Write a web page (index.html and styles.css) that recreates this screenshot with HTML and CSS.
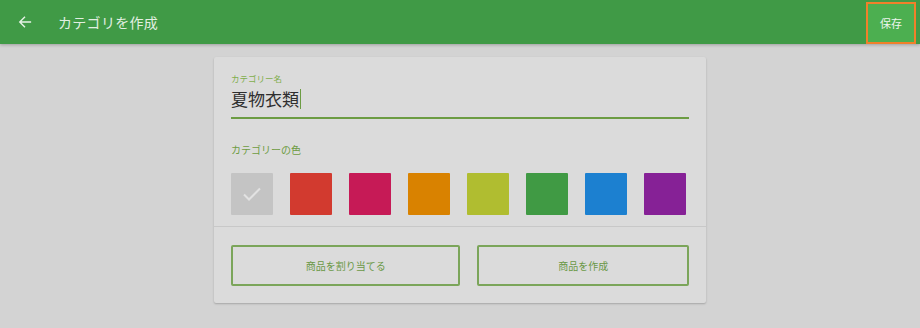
FILE: index.html
```html
<!DOCTYPE html>
<html lang="ja">
<head>
<meta charset="utf-8">
<link rel="stylesheet" href="styles.css">
</head>
<body>
<header class="appbar">
  <div class="back">
    <svg width="14" height="14" viewBox="0 0 16 16"><path d="M15 8H2.5M8 2L2 8l6 6" fill="none" stroke="#e6f2e6" stroke-width="1.6"/></svg>
  </div>
  <div class="title">カテゴリを作成</div>
  <div class="save">保存</div>
</header>
<main class="main">
  <section class="card">
    <div class="top">
      <div class="field">
        <div class="field-label">カテゴリー名</div>
        <div class="field-input">夏物衣類<span class="caret"></span></div>
      </div>
      <div class="color-label">カテゴリーの色</div>
      <div class="swatches">
        <div class="swatch sw-grey"><svg width="20" height="16" viewBox="0 0 20 16"><path d="M2 8.5l5 5L18 2.5" fill="none" stroke="#e2e2e2" stroke-width="2"/></svg></div>
        <div class="swatch sw-red"></div>
        <div class="swatch sw-pink"></div>
        <div class="swatch sw-orange"></div>
        <div class="swatch sw-lime"></div>
        <div class="swatch sw-green"></div>
        <div class="swatch sw-blue"></div>
        <div class="swatch sw-purple"></div>
      </div>
    </div>
    <div class="actions">
      <div class="btn btn-wide">商品を割り当てる</div>
      <div class="btn">商品を作成</div>
    </div>
  </section>
</main>
</body>
</html>
```

FILE: styles.css
```css
* { box-sizing: border-box; }
html, body { margin: 0; padding: 0; }
body {
  width: 920px;
  height: 328px;
  overflow: hidden;
  background: #d3d3d3;
  font-family: "Noto Sans CJK JP", "Noto Sans", sans-serif;
}
.appbar {
  height: 44px;
  background: #409a46;
  display: flex;
  align-items: center;
  box-shadow: 0 1px 3px rgba(0,0,0,0.25);
  position: relative;
}
.back {
  width: 58px;
  padding-left: 18px;
  display: flex;
  align-items: center;
}
.title {
  flex: 1;
  color: #e2efe2;
  font-size: 14px;
  letter-spacing: 0.3px;
}
.save {
  margin: 1px 4px 0 0;
  width: 50px;
  height: 42px;
  background: #4caf50;
  border: 2px solid #f0802a;
  color: #eef6ee;
  font-size: 11px;
  display: flex;
  align-items: center;
  justify-content: center;
}
.main {
  display: flex;
  justify-content: center;
  padding-top: 13px;
}
.card {
  width: 492px;
  background: #dbdbdb;
  border-radius: 2px;
  box-shadow: 0 1px 2px rgba(0,0,0,0.22);
}
.top {
  padding: 15px 17px 11px 17px;
  border-bottom: 1px solid #c8c8c8;
}
.field {
  border-bottom: 2px solid #6c9c43;
  padding-bottom: 3px;
}
.field-label {
  color: #7fae4c;
  font-size: 8.5px;
  line-height: 12px;
}
.field-input {
  color: #2e2e2e;
  font-size: 17px;
  line-height: 30px;
  display: flex;
  align-items: center;
}
.caret {
  display: inline-block;
  width: 1px;
  height: 20px;
  background: #6c9c43;
  margin-left: 1px;
}
.color-label {
  margin-top: 24px;
  color: #6e9c42;
  font-size: 10px;
  line-height: 14px;
}
.swatches {
  margin-top: 16px;
  display: flex;
  gap: 17px;
}
.swatch {
  width: 42px;
  height: 42px;
  border-radius: 1px;
  display: flex;
  align-items: center;
  justify-content: center;
}
.sw-grey { background: #c4c4c4; }
.sw-red { background: #d23a2f; }
.sw-pink { background: #c61a56; }
.sw-orange { background: #d98200; }
.sw-lime { background: #b0bd30; }
.sw-green { background: #409a44; }
.sw-blue { background: #1c80d0; }
.sw-purple { background: #862196; }
.actions {
  display: flex;
  gap: 17px;
  padding: 18px 17px 17px 17px;
}
.btn {
  flex: 211;
  height: 41px;
  border: 2px solid #7ba55a;
  border-radius: 2px;
  color: #6a9846;
  font-size: 10px;
  display: flex;
  align-items: center;
  justify-content: center;
}
.btn-wide { flex: 229; }
```
